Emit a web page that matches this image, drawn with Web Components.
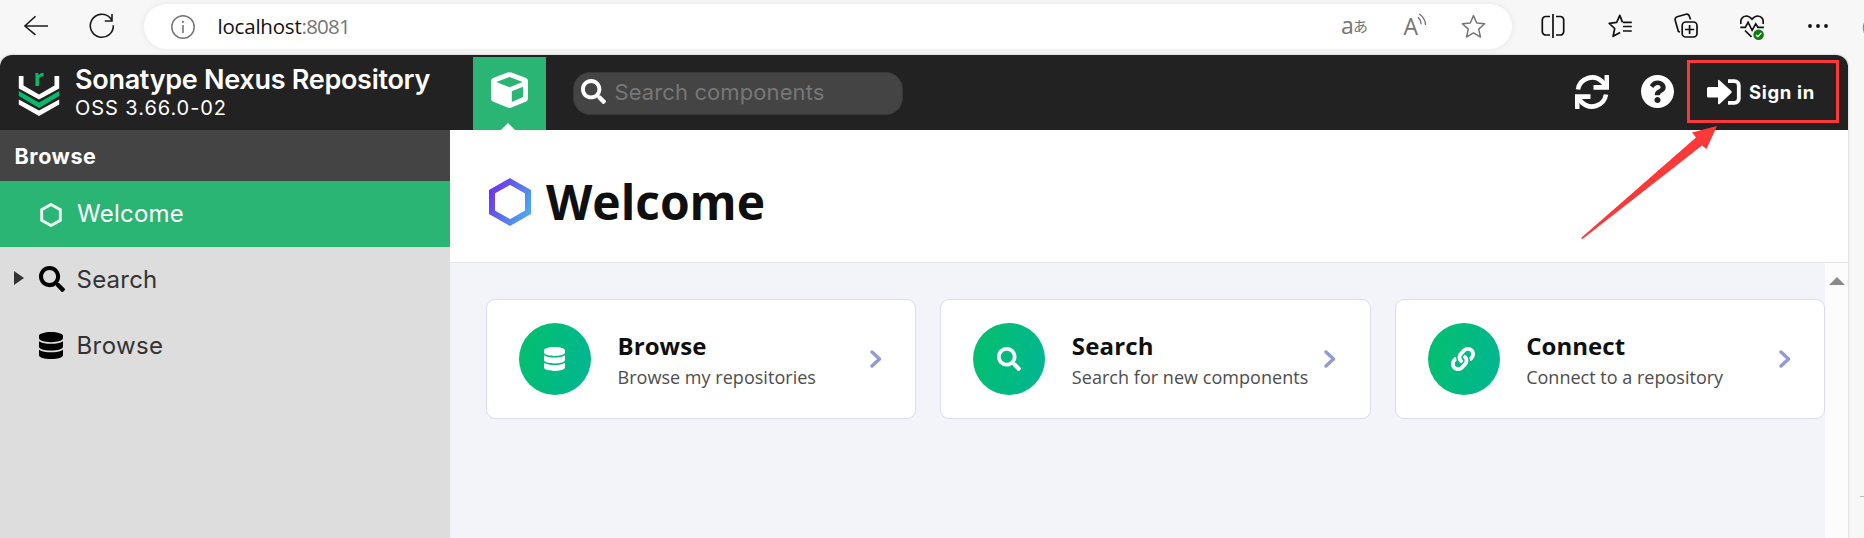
<!DOCTYPE html>
<html lang="en">
<head>
<meta charset="utf-8">
<title>Sonatype Nexus Repository</title>
<style>
html,body{margin:0;height:100%;overflow:hidden;background:#f7f7f7}
</style>
</head>
<body>
<nexus-window></nexus-window>
<script>
const ICONS = {
  back: ['0 0 24 24', '<path d="M24 12H.8M11.5 1.3.8 12l10.7 9.7" fill="none" stroke="currentColor" stroke-width="1.6"/>'],
  reload: ['0 0 26 26', '<path d="M24.3 12.2A11.5 11.5 0 1 1 21 4.7L22.8 7M23 1v7h-7.2" fill="none" stroke="currentColor" stroke-width="1.6"/>'],
  info: ['0 0 24 24', '<circle cx="12" cy="12" r="11.2" fill="none" stroke="currentColor" stroke-width="1.5"/><path d="M12 10v8" stroke="currentColor" stroke-width="1.6"/><circle cx="12" cy="6.8" r="1.1" fill="currentColor"/>'],
  waves: ['0 0 10 14', '<path d="M1 4.2a11 11 0 0 1 3.2 7M2.3 1a14.5 14.5 0 0 1 6.3 11" fill="none" stroke="currentColor" stroke-width="1.4"/>'],
  star: ['0 0 24 24', '<path d="m12 1.6 3.1 7 7.6.8-5.7 5.1 1.7 7.6L12 18.2l-6.700 3.900L7 14.500 1.300 9.400l7.600-.8z" fill="none" stroke="currentColor" stroke-width="1.4" stroke-linejoin="round"/>'],
  split: ['0 0 24 24', '<path d="M9 2.500H5A3.500 3.500 0 0 0 1.300 6v11.500A3.500 3.500 0 0 0 5 21H9M15 2.500h4A3.500 3.500 0 0 1 22.700 6v11.500A3.500 3.500 0 0 1 19 21H15M12 0v24" fill="none" stroke="currentColor" stroke-width="1.700"/>'],
  favs: ['0 0 24 24', '<path d="M14.500 8.400 11.800 1.400 8.700 8.400l-7.500.9 5.500 5.200-1.600 7.800 7-3.800M15 8.300h8.800M15 12.500h8.800M15 17h8.800" fill="none" stroke="currentColor" stroke-width="1.700" stroke-linejoin="round"/>'],
  collect: ['0 0 24 26', '<rect x="8.200" y="9" width="14.800" height="15" rx="3.500" fill="none" stroke="currentColor" stroke-width="1.700"/><path d="M15.600 12v9M11 16.500h9.200M5.800 19.300 4.300 18.300 1.200 7.200a3 3 0 0 1 2-3.500L12 1.200c1.800-.5 3 .5 3.500 2.200l1 3" fill="none" stroke="currentColor" stroke-width="1.700"/>'],
  heart: ['0 0 24 27', '<path d="M1 10C0 5.500 2.600 2 6.200 2c2.500 0 4.300 1.300 5.800 3.200C13.500 3.300 15.300 2 17.800 2 21.500 2 24 5.500 23 10M.3 13.300h5l2.800-5 4 8 3.600-6.500 2.200 3.500h6M5 16.500l6.500 6.300" fill="none" stroke="currentColor" stroke-width="1.700"/><circle cx="18.600" cy="20.800" r="5.300" fill="#107c10"/><path d="m16 21 1.800 1.700 3.600-3.800" fill="none" stroke="#fff" stroke-width="1.300"/>'],
  more: ['0 0 20 4', '<g fill="currentColor"><circle cx="2" cy="2" r="1.900"/><circle cx="10" cy="2" r="1.900"/><circle cx="18" cy="2" r="1.900"/></g>'],
  cube: ['0 0 37 36', '<path fill="#fff" fill-rule="evenodd" d="M16.500.6Q18.500 0 20.500.6L35 6Q37 7 37 9v17.500q0 2-1.800 3L20.500 35.500q-2 .9-4 0L1.800 29.500Q0 28.500 0 26.500V9Q0 7 2 6zM5.300 10 18.500 5 31.700 10 18.500 15.300zM20.800 19.200 32 14.800V25L20.800 30z"/>'],
  search: ['0 0 512 512', '<path fill="currentColor" d="M505 442.700L405.300 343c-4.500-4.500-10.600-7-17-7H372c27.600-35.300 44-79.700 44-128C416 93.100 322.900 0 208 0S0 93.100 0 208s93.100 208 208 208c48.300 0 92.700-16.400 128-44v16.300c0 6.400 2.500 12.500 7 17l99.700 99.700c9.400 9.400 24.600 9.400 33.900 0l28.300-28.300c9.400-9.400 9.400-24.600.1-34zM208 336c-70.700 0-128-57.200-128-128 0-70.700 57.200-128 128-128 70.700 0 128 57.200 128 128 0 70.700-57.200 128-128 128z"/>'],
  database: ['0 0 448 512', '<path fill="currentColor" d="M448 73.143v45.714C448 159.143 347.667 192 224 192S0 159.143 0 118.857V73.143C0 32.857 100.333 0 224 0s224 32.857 224 73.143zM448 176v102.857C448 319.143 347.667 352 224 352S0 319.143 0 278.857V176c48.125 33.143 136.208 48.572 224 48.572S399.874 209.143 448 176zm0 160v102.857C448 479.143 347.667 512 224 512S0 479.143 0 438.857V336c48.125 33.143 136.208 48.572 224 48.572S399.874 369.143 448 336z"/>'],
  help: ['8 8 496 496', '<path fill="currentColor" d="M504 256c0 136.997-111.043 248-248 248S8 392.997 8 256C8 119.083 119.043 8 256 8s248 111.083 248 248zM262.655 90c-54.497 0-89.255 22.957-116.549 63.758-3.536 5.286-2.353 12.415 2.715 16.258l34.699 26.310c5.205 3.947 12.621 3.008 16.665-2.122 17.864-22.658 30.113-35.797 57.303-35.797 20.429 0 45.698 13.148 45.698 32.958 0 14.976-12.363 22.667-32.534 33.976C247.128 238.528 216 254.941 216 296v4c0 6.627 5.373 12 12 12h56c6.627 0 12-5.373 12-12v-1.333c0-28.462 83.186-29.647 83.186-106.667 0-58.002-60.165-102-116.531-102zM256 338c-25.365 0-46 20.635-46 46 0 25.364 20.635 46 46 46s46-20.636 46-46c0-25.365-20.635-46-46-46z"/>'],
  link: ['0 0 512 512', '<path fill="currentColor" d="M326.612 185.391c59.747 59.809 58.927 155.698.36 214.590-.11.12-.24.25-.36.37l-67.200 67.200c-59.270 59.270-155.699 59.262-214.960 0-59.270-59.260-59.270-155.700 0-214.960l37.106-37.106c9.840-9.840 26.786-3.300 27.294 10.606.648 17.722 3.826 35.527 9.690 52.721 1.986 5.822.567 12.262-3.783 16.612l-13.087 13.087c-28.026 28.026-28.905 73.660-1.155 101.960 28.024 28.579 74.086 28.749 102.325.51l67.200-67.190c28.191-28.191 28.073-73.757 0-101.830-3.701-3.694-7.429-6.564-10.341-8.569a16.037 16.037 0 0 1-6.947-12.606c-.396-10.567 3.348-21.456 11.698-29.806l21.054-21.055c5.521-5.521 14.182-6.199 20.584-1.731a152.482 152.482 0 0 1 20.522 17.197zM467.547 44.449c-59.261-59.262-155.690-59.270-214.960 0l-67.200 67.200c-.12.12-.25.25-.36.37-58.566 58.892-59.387 154.781.36 214.590a152.454 152.454 0 0 0 20.521 17.196c6.402 4.468 15.064 3.789 20.584-1.731l21.054-21.055c8.350-8.350 12.094-19.239 11.698-29.806a16.037 16.037 0 0 0-6.947-12.606c-2.912-2.005-6.640-4.875-10.341-8.569-28.073-28.073-28.191-73.639 0-101.830l67.200-67.190c28.239-28.239 74.300-28.069 102.325.51 27.750 28.300 26.872 73.934-1.155 101.960l-13.087 13.087c-4.350 4.350-5.769 10.790-3.783 16.612 5.864 17.194 9.042 34.999 9.690 52.721.509 13.906 17.454 20.446 27.294 10.606l37.106-37.106c59.271-59.259 59.271-155.699.001-214.959z"/>'],
  sync: ['0 0 34 34', '<path d="M3 14.500A14.300 14.300 0 0 1 27 6.500L31 11M31 19.500A14.300 14.300 0 0 1 7 27.500L3 23" fill="none" stroke="currentColor" stroke-width="4.600"/><path fill="currentColor" d="M29.500 0H34v14.800H18.500V10h11zM4.500 34H0V19.200h15.500V24h-11z"/>'],
  signin: ['0 0 34 26', '<path fill="currentColor" d="M1.500 8H11V2q0-2 1.700-.6L24.300 12q1 1 0 2L12.700 25q-1.700 1-1.700-1v-5.500H1.500q-1.500 0-1.500-1.500V9.500Q0 8 1.500 8z"/><path d="M21 2.200h6.500a4.300 4.300 0 0 1 4.300 4.300v13a4.300 4.300 0 0 1-4.300 4.300H21" fill="none" stroke="currentColor" stroke-width="3.800"/>'],
  hex: ['0 0 42 48', '<defs><linearGradient id="g" x1="0" y1=".2" x2="1" y2=".8"><stop stop-color="#6f35ee"/><stop offset="1" stop-color="#4ba9ec"/></linearGradient></defs><path d="M21 3.500 39 13.700v20.600L21 44.500 3 34.300V13.700z" fill="none" stroke="url(#g)" stroke-width="6"/>'],
  hexline: ['0 0 22 24', '<path d="M11 1.500 20.300 6.700v10.600L11 22.500 1.700 17.300V6.700z" fill="none" stroke="currentColor" stroke-width="2.900" stroke-opacity=".9"/>'],
  chevron: ['0 0 12 18', '<path d="m2 2 7.500 7L2 16" fill="none" stroke="#939ad6" stroke-width="3.400" stroke-linecap="round" stroke-linejoin="round"/>'],
  caret: ['0 0 10 14', '<path d="M0 0 10 7 0 14z" fill="#333"/>'],
  up: ['0 0 16 8', '<path d="M0 8 8 0l8 8z" fill="#8a8a8a"/>'],
  logo: ['0 0 42 40', '<path fill="#fff" d="M.8 0H5.500v9.500L21 18.500l15.500-9V0h4.700v12.500L21 23.500.8 12.500zM.8 23.500 21 34.500l20.200-11v5L21 40 .8 28.500z"/><path fill="#06b96b" d="M.8 15 21 26.500 41.200 15v5L21 32 .8 20z"/>'],
};

class UiIcon extends HTMLElement {
  connectedCallback() {
    const [box, body] = ICONS[this.getAttribute('name')];
    const w = this.getAttribute('w'), h = this.getAttribute('h');
    this.attachShadow({mode: 'open'}).innerHTML =
      `<style>:host{display:block;flex:none;width:${w}px;height:${h}px}svg{display:block}</style>
       <svg width="${w}" height="${h}" viewBox="${box}" preserveAspectRatio="none">${body}</svg>`;
  }
}

/* A single line of text, tracked so that it fills the given measure. */
class TextRun extends HTMLElement {
  connectedCallback() {
    this.attachShadow({mode: 'open'}).innerHTML =
      '<style>:host{display:block;white-space:nowrap}span{display:inline-block}</style><span><slot></slot></span>';
    const span = this.shadowRoot.querySelector('span');
    const natural = span.getBoundingClientRect().width;
    const want = +this.getAttribute('measure');
    if (want && natural) span.style.letterSpacing = (want - natural) / this.textContent.length + 'px';
  }
}

class BrowserBar extends HTMLElement {
  connectedCallback() {
    this.attachShadow({mode: 'open'}).innerHTML = `<style>
      :host{display:flex;align-items:center;box-sizing:border-box;height:55px;padding:0 0 2px 24px;background:#f7f7f7;color:#1b1b1b;font:20.500px/30px "Open Sans",sans-serif}
      .pill{display:flex;align-items:center;flex:none;box-sizing:border-box;width:1368px;height:45px;margin-left:29px;padding:0 26px 0 27px;border-radius:23px;background:#fff;box-shadow:0 0 7px rgba(0,0,0,.08);color:#757575}
      .url{display:flex;margin:0 0 1px 22.500px;flex:1}.host{color:#111}
      .aa{display:flex;align-items:center;width:25px;font:23px/26px "Open Sans",sans-serif;margin-bottom:4px}
      .aa .la{width:12px}
      .ja{font:15px/20px "Noto Sans CJK JP",sans-serif;margin-top:3px}
      .read{display:flex;align-items:flex-start;margin-left:37.500px;width:23px;margin-bottom:2px}
      .a{width:13px;font:23px/26px "Open Sans",sans-serif}
      .tools{display:flex;align-items:center;color:#111;padding-bottom:1px}
    </style>
    <ui-icon name="back" w="24" h="22" style="margin-bottom:1px"></ui-icon>
    <ui-icon name="reload" w="26" h="26" style="margin:0 0 1px 41px"></ui-icon>
    <div class="pill">
      <ui-icon name="info" w="24" h="24"></ui-icon>
      <div class="url"><text-run class="host" measure="84">localhost</text-run><text-run measure="48.500">:8081</text-run></div>
      <div class="aa"><span class="la">a</span><span class="ja">あ</span></div>
      <div class="read"><span class="a">A</span><ui-icon name="waves" w="10" h="14"></ui-icon></div>
      <ui-icon name="star" w="25" h="25" style="margin-left:34.500px"></ui-icon>
    </div>
    <div class="tools">
      <ui-icon name="split" w="24" h="24" style="margin-left:29px"></ui-icon>
      <ui-icon name="favs" w="24" h="24" style="margin-left:43px"></ui-icon>
      <ui-icon name="collect" w="24" h="26" style="margin-left:42px"></ui-icon>
      <ui-icon name="heart" w="24" h="27" style="margin:2px 0 0 42px"></ui-icon>
      <ui-icon name="more" w="20" h="4" style="margin-left:44px"></ui-icon>
    </div>`;
  }
}

class NexusHeader extends HTMLElement {
  connectedCallback() {
    this.attachShadow({mode: 'open'}).innerHTML = `<style>
      :host{display:flex;height:75px;background:#222;color:#fff;border-radius:12px 12px 0 0;font-family:Inter,sans-serif}
      .brand{display:flex;width:473px}
      .logo{display:grid;width:42px;margin:16px 0 0 18px;height:44px}
      .logo>*{grid-area:1/1}.r{font:700 23px/24px "Open Sans",sans-serif;color:#06b96b;justify-self:center;margin-top:-6px}
      .names{padding:9px 0 0 15px}
      .t{font-size:27px;line-height:32px;font-weight:600}.v{font-size:20px;line-height:25px}
      .tab{display:flex;flex-direction:column;align-items:center;justify-content:space-between;box-sizing:border-box;width:73px;height:73px;margin-top:2px;background:#2ab574;padding-top:15px}
      .notch{width:0;border:7px solid transparent;border-top:0;border-bottom-color:#fff;margin-right:3px}
      .find{display:flex;align-items:center;box-sizing:border-box;width:330px;height:43px;margin:17px 0 0 27px;padding:0 7px;border:1px solid #383838;border-radius:17px;background:#444;color:#777;font-size:22px}
      .find ui-icon{color:#fff;margin-bottom:4px}.find text-run{margin:0 0 3px 8.500px;line-height:30px}
      .acts{display:flex;align-items:center;margin-left:auto;padding-bottom:2px}
      .sign{display:flex;align-items:center;box-sizing:border-box;width:152px;height:63px;margin:0 9px 0 13px;padding-left:17px;border:3px solid #fd3838;font-weight:700;font-size:18.500px}
      .sign text-run{margin:1px 0 0 8px}
    </style>
    <div class="brand">
      <div class="logo"><ui-icon name="logo" w="42" h="40" style="margin-top:5px"></ui-icon><span class="r">r</span></div>
      <div class="names"><text-run class="t" measure="355">Sonatype Nexus Repository</text-run><text-run class="v" measure="152">OSS 3.66.0-02</text-run></div>
    </div>
    <div class="tab"><ui-icon name="cube" w="37" h="36"></ui-icon><div class="notch"></div></div>
    <div class="find"><ui-icon name="search" w="25" h="25"></ui-icon><text-run measure="210">Search components</text-run></div>
    <div class="acts">
      <ui-icon name="sync" w="34" h="34"></ui-icon>
      <ui-icon name="help" w="33" h="33" style="margin-left:32px"></ui-icon>
      <div class="sign"><ui-icon name="signin" w="34" h="26"></ui-icon><text-run measure="66">Sign in</text-run></div>
    </div>`;
  }
}

class NavItem extends HTMLElement {
  connectedCallback() {
    const a = n => this.getAttribute(n);
    this.attachShadow({mode: 'open'}).innerHTML = `<style>
      :host{display:flex;align-items:center;height:66px;color:#333;font:24px/30px Inter,sans-serif}
      :host([active]){background:#2ab574;color:#fff}
      .c{width:25px;padding-left:14px}.i{width:37.500px;color:#000}:host([active]) .i{color:#fff;padding:2px 0 0 1px;width:37px}
    </style>
    <div class="c">${this.hasAttribute('tree') ? '<ui-icon name="caret" w="10" h="14" style="margin-bottom:4px"></ui-icon>' : ''}</div>
    <div class="i"><ui-icon name="${a('icon')}" w="${a('w')}" h="${a('h')}" style="margin-bottom:${a('lift') || 0}px"></ui-icon></div>
    <text-run measure="${a('measure')}">${a('label')}</text-run>`;
  }
}

class NexusSidebar extends HTMLElement {
  connectedCallback() {
    this.attachShadow({mode: 'open'}).innerHTML = `<style>
      :host{display:block;width:450px;background:#ddd}
      h2{box-sizing:border-box;margin:0;height:51px;padding:1px 0 0 14.500px;background:#444;color:#fff;font:700 21.500px/50px Inter,sans-serif}
    </style>
    <h2><text-run measure="82">Browse</text-run></h2>
    <nav-item active icon="hexline" w="22" h="24" label="Welcome" measure="107"></nav-item>
    <nav-item tree icon="search" w="26" h="26" lift="2" label="Search" measure="81"></nav-item>
    <nav-item icon="database" w="24" h="27" lift="2" label="Browse" measure="87"></nav-item>`;
  }
}

class ActionCard extends HTMLElement {
  connectedCallback() {
    const a = n => this.getAttribute(n);
    this.attachShadow({mode: 'open'}).innerHTML = `<style>
      :host{display:flex;align-items:center;box-sizing:border-box;height:120px;padding:0 33.500px 0 32px;border:1px solid #dbdcf2;border-radius:9px;background:#fff;font-family:"Open Sans",sans-serif}
      .disc{display:flex;align-items:center;justify-content:center;box-sizing:border-box;width:72px;height:72px;padding-right:1px;border-radius:50%;background:linear-gradient(105deg,#04c06c,#00b594);color:#fff;flex:none}
      .copy{flex:1;min-width:0;margin-left:26.500px}
      .t{font-weight:700;font-size:24px;line-height:32px;color:#0f0f0f;margin-bottom:3px}.s{font-size:18px;line-height:24px;color:#4d4d4d}
    </style>
    <div class="disc"><ui-icon name="${a('icon')}" w="${a('w')}" h="24"></ui-icon></div>
    <div class="copy"><text-run class="t" measure="${a('tm')}">${a('label')}</text-run><text-run class="s" measure="${a('sm')}">${a('text')}</text-run></div>
    <ui-icon name="chevron" w="12" h="18"></ui-icon>`;
  }
}

class WelcomePage extends HTMLElement {
  connectedCallback() {
    this.attachShadow({mode: 'open'}).innerHTML = `<style>
      :host{display:flex;flex-direction:column;flex:1;background:#f3f4f9}
      header{display:flex;align-items:center;box-sizing:border-box;height:133px;padding:12px 0 0 39px;background:#fff;border-bottom:1px solid #e4e4e4}
      h1{margin:0 0 0 15px;font:700 48px/60px "Open Sans",sans-serif;color:#0f0f0f}
      .body{display:flex;flex:1}
      .cards{flex:1;display:grid;grid-template-columns:repeat(3,1fr);gap:24px;align-content:start;padding:36px 0 0 36px}
      .scroll{width:23px;background:#fcfcfc;padding-top:14px;display:flex;justify-content:center;align-items:flex-start}
    </style>
    <header><ui-icon name="hex" w="42" h="48"></ui-icon><h1><text-run measure="219">Welcome</text-run></h1></header>
    <div class="body"><div class="cards">
      <action-card icon="database" w="21" label="Browse" text="Browse my repositories" tm="89" sm="198.500"></action-card>
      <action-card icon="search" w="24" label="Search" text="Search for new components" tm="82" sm="236.500"></action-card>
      <action-card icon="link" w="24" label="Connect" text="Connect to a repository" tm="99" sm="197"></action-card>
    </div><div class="scroll"><ui-icon name="up" w="16" h="8"></ui-icon></div></div>`;
  }
}

class NexusWindow extends HTMLElement {
  connectedCallback() {
    this.attachShadow({mode: 'open'}).innerHTML = `<style>
      :host{display:block;position:relative;width:1864px;height:538px;overflow:hidden;background:#f7f7f7}
      .app{width:1848px;box-shadow:0 0 2px 1px #dcdcdc;border-radius:12px 12px 0 0}
      .main{display:flex;height:408px}
      .arrow{position:absolute;left:0;top:0}
    </style>
    <browser-bar></browser-bar>
    <div class="app"><nexus-header></nexus-header><div class="main"><nexus-sidebar></nexus-sidebar><welcome-page></welcome-page></div></div>
    <svg class="arrow" width="1864" height="538"><path fill="#fd3838" d="M1717 126 1692 132.500 1696 137.500 1581 238l1.500 1L1702 145.500l4.500 3.500z"/><path d="M1860 496.500h4" stroke="#bbb"/><path d="M1864 22.500q-2.500 4.500 0 11" fill="#2eb8a0"/></svg>`;
  }
}

customElements.define('ui-icon', UiIcon);
customElements.define('text-run', TextRun);
customElements.define('browser-bar', BrowserBar);
customElements.define('nexus-header', NexusHeader);
customElements.define('nav-item', NavItem);
customElements.define('nexus-sidebar', NexusSidebar);
customElements.define('action-card', ActionCard);
customElements.define('welcome-page', WelcomePage);
customElements.define('nexus-window', NexusWindow);
</script>
</body>
</html>
